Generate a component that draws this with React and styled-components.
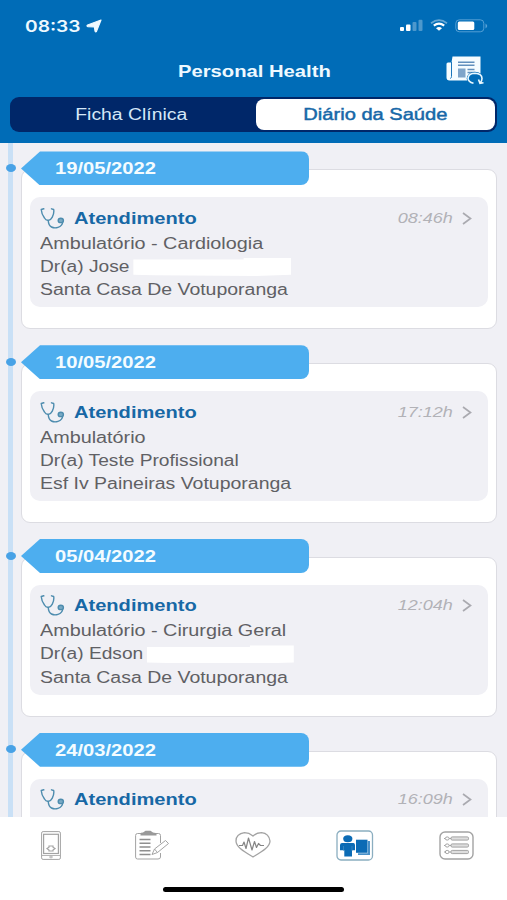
import React from "react";
import styled, { createGlobalStyle, css } from "styled-components";

const GlobalStyle = createGlobalStyle`
  * {
    box-sizing: border-box;
  }

  body {
    margin: 0;
    background: #fff;
    font-family: "Liberation Sans", Arial, sans-serif;
  }
`;

// widened type, every label picks its own factor
const wide = css`
  display: inline-block;
  white-space: pre;
  transform: scaleX(${(props) => props.$wide || 1.21});
  transform-origin: ${(props) => props.$origin || "left"} center;
`;

const Screen = styled.div`
  width: 507px;
  height: 900px;
  display: flex;
  flex-direction: column;
  overflow: hidden;
  background: #f0f0f5;
`;

const Header = styled.header`
  height: 143px;
  flex: none;
  background: #006cb7;
  color: #eef9ff;
`;

const StatusBar = styled.div`
  height: 50px;
  padding: 1px 19px 0 25px;
  display: flex;
  align-items: center;
  justify-content: space-between;
`;

const Clock = styled.div`
  width: 77px;
  display: flex;
  align-items: center;
  justify-content: space-between;
`;

const ClockText = styled.span`
  ${wide}
  font: 600 16px/20px Inter, sans-serif;
`;

const StatusIcons = styled.div`
  display: flex;
  align-items: center;
  gap: 7px;
`;

const TitleBar = styled.div`
  height: 47px;
  padding: 0 23px 6px 63px;
  display: grid;
  grid-template-columns: 1fr 38px;
  align-items: center;
`;

const Title = styled.h1`
  margin: 0;
  text-align: center;
  font-size: 16.5px;
  line-height: 20px;

  span {
    ${wide}
  }
`;

const Tabs = styled.div`
  height: 35px;
  margin: 0 10px;
  padding: 2px;
  display: grid;
  grid-template-columns: 244px 1fr;
  border-radius: 9px;
  background: #002769;
`;

const Tab = styled.button`
  border: none;
  padding: ${(props) => (props.$active ? "0" : "0 5px 0 0")};
  border-radius: 8px;
  font: 16px/20px "Liberation Sans", Arial, sans-serif;
  color: ${(props) => (props.$active ? "#1768a8" : "#d5e8f8")};
  background: ${(props) => (props.$active ? "#fff" : "transparent")};
  -webkit-text-stroke: ${(props) => (props.$active ? "0.45px #1768a8" : "0")};

  span {
    ${wide}
  }
`;

const Feed = styled.main`
  flex: 1;
  min-height: 0;
  overflow: hidden;
`;

const Entry = styled.section`
  height: 193.8px;
  display: grid;
  grid-template-columns: 21px 476px;
`;

const Rail = styled.div`
  padding: 21px 0 0 5.5px;
  background: linear-gradient(#c9e0f6, #c9e0f6) 8px 0 / 5px 100% no-repeat;
`;

const Dot = styled.div`
  width: 10px;
  height: 8px;
  border-radius: 50%;
  background: #48a2e6;
`;

const EntryBody = styled.div`
  padding-top: 8.4px;
`;

const Ribbon = styled.div`
  width: 288px;
  height: 34px;
  margin-bottom: -16.2px;
  padding-left: 34px;
  position: relative;
  border-radius: 0 8px 8px 0;
  background: #4daeef;
  clip-path: polygon(19px 0, 100% 0, 100% 100%, 19px 100%, 0 50%);
  color: #f4fcff;
  font-size: 16px;
  font-weight: bold;
  line-height: 35px;

  span {
    ${wide}
  }
`;

const Card = styled.div`
  height: 160px;
  padding: 27px 8px 0;
  border: 1px solid #dcdce2;
  border-radius: 9px;
  background: #fff;
`;

const Panel = styled.article`
  height: 110px;
  padding: 9.5px 16px 0 10px;
  border-radius: 10px;
  background: #f0f0f5;
  color: #606064;
`;

const PanelHead = styled.div`
  height: 24px;
  display: flex;
  align-items: center;
`;

const Kind = styled.h2`
  margin: 0 auto 0 8px;
  font-size: 16px;
  line-height: 24px;
  color: #1768a5;

  span {
    ${wide}
  }
`;

const Hour = styled.span`
  ${wide}
  font-size: 15px;
  line-height: 22px;
  font-style: italic;
  color: #b2b2b7;
  margin: 0 9px 2px 0;
`;

const Line = styled.p`
  margin: 0;
  height: 23.2px;
  font-size: 16px;
  line-height: 25px;

  > span {
    ${wide}
  }
`;

const Blank = styled.i`
  display: inline-block;
  width: ${(props) => props.$width}px;
  height: 18px;
  margin-left: 3px;
  vertical-align: -4px;
  background: #fff;
  clip-path: polygon(0 9%, 70% 9%, 70% 0, 100% 0, 100% 94%, 78% 100%, 14% 97%, 0 94%);
`;

const BottomBar = styled.nav`
  height: 83px;
  flex: none;
  padding-top: 10px;
  background: #fff;
`;

const NavItems = styled.div`
  display: grid;
  grid-template-columns: repeat(5, 1fr);
  height: 36px;
`;

const NavItem = styled.button`
  border: none;
  padding: 0;
  background: none;
  display: flex;
  align-items: center;
  justify-content: center;
  color: #a3a3a3;
`;

const HomeIndicator = styled.div`
  width: 181px;
  height: 5px;
  margin: 24px auto 0;
  border-radius: 3px;
  background: #000;
`;

const LocationIcon = () => (
  <svg width="16" height="14" viewBox="0 0 16 14">
    <path d="M15 1 10.500 12.400 Q9.600 13.600 9 12 L8.400 8 2 7.600 Q.2 7 1.600 6 Z" fill="#eef9ff" stroke="#eef9ff" strokeWidth="1.200" strokeLinejoin="round" />
  </svg>
);

const SignalIcon = () => (
  <svg width="23" height="13" viewBox="0 0 23 13" fill="#fff">
    <rect x="0" y="8" width="4" height="4" rx="1" />
    <rect x="6" y="5.500" width="4.500" height="6.500" rx="1" />
    <rect x="12.500" y="3" width="4" height="9" rx="1" opacity=".3" />
    <rect x="18.500" y=".8" width="4" height="11.200" rx="1" opacity=".3" />
  </svg>
);

const WifiIcon = () => (
  <svg width="18" height="13" viewBox="0 0 18 13" fill="none" stroke="#fff">
    <path d="M1 4.200Q9-1.800 17 4.200" strokeWidth="1.700" opacity=".4" />
    <path d="M3.800 6.700Q9 2.600 14.200 6.700" strokeWidth="2.200" />
    <path d="M6 9.200Q9 7 12 9.200L9 11.800Z" fill="#fff" stroke="none" />
  </svg>
);

const BatteryIcon = () => (
  <svg width="33" height="14" viewBox="0 0 33 14">
    <rect x=".8" y=".8" width="28" height="12" rx="3.500" fill="none" stroke="#6fb0de" opacity=".75" />
    <rect x="2.800" y="2.500" width="16.500" height="8.600" rx="1.500" fill="#fff" />
    <path d="M30.500 4.500Q34 7 30.500 9.500Z" fill="#6fb0de" opacity=".8" />
  </svg>
);

const NewsIcon = () => (
  <svg width="38" height="30" viewBox="0 0 38 30">
    <path d="M6.500.5H34.500V24.500H3.500Q.5 24.500.5 21.500V8Q.5 6.500 2 6.500H5.500Z" fill="#f5fcff" />
    <path d="M5.500 6V20.500Q5.500 22 4.300 22.500" fill="none" stroke="#1a76bb" />
    <path d="M12 6.200H28.500M12 9.200H28.500" stroke="#6290bd" strokeWidth="1.600" />
    <rect x="12" y="12.500" width="7.500" height="9" fill="#7fa5ca" />
    <path d="M21.500 13.500H28.500M21.500 16.500H28.500" stroke="#6290bd" strokeWidth="1.600" />
    <ellipse cx="29" cy="22.500" rx="8.300" ry="6.800" fill="#006cb7" />
    <path d="M27.500 27.300Q22 26 22 22Q23 17.200 29 17.200Q36 17.500 36 22.500Q36 25 34.300 26.700M32.500 23.500L34 27.300 37.500 26.800" fill="none" stroke="#e9f8ff" strokeWidth="1.600" />
  </svg>
);

const StethoscopeIcon = () => (
  <svg width="26" height="22" viewBox="0 0 26 22" fill="none" stroke="#4d8cae" strokeWidth="1.400" strokeLinecap="round" strokeLinejoin="round">
    <path d="M3.800.8 1.200 1.500Q1.500 6 4.500 10Q6 12.600 8.200 12.200Q10.500 12.600 12.300 9.200Q14.300 5.500 13.700 1.500L11.500.8M8.200 12.200Q8.500 17.500 11.500 19Q14.500 20.500 18 19.300Q22.500 18 22.800 13.500" />
    <ellipse cx="20.800" cy="12.400" rx="2.600" ry="2.200" fill="#79a9c4" />
  </svg>
);

const Chevron = () => (
  <svg width="10" height="14" viewBox="0 0 10 14" fill="none" stroke="#aaaab0" strokeWidth="1.700">
    <path d="M1 1 8.500 6.500 1 12" />
  </svg>
);

const PhoneIcon = () => (
  <svg width="20" height="29" viewBox="0 0 20 29" fill="none" stroke="currentColor">
    <rect x=".6" y=".6" width="18.800" height="27.800" rx="1.500" />
    <rect x="2.600" y="3.300" width="14.800" height="19.200" strokeWidth="1.200" />
    <path d="M1 24.500H19M8 26H12M10 24.500V27.500" strokeWidth=".8" />
    <path d="M8 15H12V16.200L14 17.500 12 19V20H8V19L6 17.500 8 16.200Z" strokeWidth="1.200" />
  </svg>
);

const NotesIcon = () => (
  <svg width="34" height="30" viewBox="0 0 34 30" fill="none" stroke="currentColor">
    <path d="M6 3.500H2.500Q.6 3.500.6 5.500V27Q.6 29 2.500 29H23Q25.500 29 25.500 27V23M20.500 3.500H23.500Q25.500 3.500 25.500 5.500V13" />
    <path d="M5.500 5.500V3.500Q5.500 2.500 8 2.500L10.500.7H15.500L18 2.500Q21.500 2.500 21.500 4V5.500Z" fill="#999" stroke="none" />
    <path d="M4.500 9.500H15.500M4.500 13.200H15.500M4.500 17H15.500M4.500 20.800H15.500M4.500 24.500H15.500" stroke="#8f8f8f" strokeWidth="1.600" />
    <path d="M17 24.500 19.500 19 30.500 10.500 33.500 13.500 22.500 22.500ZM19.500 19 22.500 22.500" fill="#fff" />
  </svg>
);

const HeartIcon = () => (
  <svg width="36" height="26" viewBox="0 0 36 26" fill="none" stroke="currentColor" strokeWidth="1.300" strokeLinejoin="round">
    <path d="M18 4Q14 .7 9.500.7Q1 2 1 9C1 15 9 19.500 18 25C27 19.500 35 15 35 9Q34 1.500 26.500.7Q21.500.8 18 4Z" />
    <path d="M4 13.500H7.500L9 10 11 16.500 13.500 6 17 18 19.500 9.500 21.500 15.500 23.500 11.500 25.500 13.500H29" stroke="#858585" strokeWidth="1.200" />
  </svg>
);

const DiaryIcon = () => (
  <svg width="38" height="31" viewBox="0 0 38 31">
    <rect x="1" y="1" width="35.500" height="29" rx="4" fill="#fff" stroke="#8baec0" strokeWidth="1.300" />
    <g fill="#0b6bb5">
      <ellipse cx="11.800" cy="8.700" rx="4.600" ry="3.500" />
      <path d="M6 13H17.500Q18.800 13 19 15V20.300H16V26.500H8.300V20.300H4V15Q4.200 13 6 13Z" />
      <path d="M20 9.700H31.500V22.800H20Z" />
      <path d="M31.800 11H34V25H22V23.200H31.800Z" opacity=".75" />
    </g>
    <path d="M7.500 16V21M16 16V21" stroke="#4c96ca" strokeWidth=".6" />
  </svg>
);

const ListIcon = () => (
  <svg width="35" height="29" viewBox="0 0 35 29" fill="none" stroke="currentColor">
    <rect x="1" y="1" width="33" height="27" rx="5" strokeWidth="1.400" />
    {[7.5, 14.5, 21].map((y) => (
      <g key={y}>
        <ellipse cx="8.200" cy={y} rx="1.900" ry="1.600" />
        <path d={`M5 ${y}H6M10.200 ${y}H12`} />
        <rect x="12" y={y - 1.6} width="17.500" height="3.200" rx="1.200" fill="#dedede" />
      </g>
    ))}
  </svg>
);

const entries = [
  { date: "19/05/2022", hour: "08:46h", place: "Ambulatório - Cardiologia", doctor: "Dr(a) Jose", blank: 132, unit: "Santa Casa De Votuporanga" },
  { date: "10/05/2022", hour: "17:12h", place: "Ambulatório", doctor: "Dr(a) Teste Profissional", unit: "Esf Iv Paineiras Votuporanga" },
  { date: "05/04/2022", hour: "12:04h", place: "Ambulatório - Cirurgia Geral", doctor: "Dr(a) Edson", blank: 123, unit: "Santa Casa De Votuporanga" },
  { date: "24/03/2022", hour: "16:09h" },
];

const DiaryEntry = ({ entry }) => (
  <Entry>
    <Rail><Dot /></Rail>
    <EntryBody>
      <Ribbon $wide={1.26}><span>{entry.date}</span></Ribbon>
      <Card>
        <Panel>
          <PanelHead>
            <StethoscopeIcon />
            <Kind $wide={1.255}><span>Atendimento</span></Kind>
            <Hour $wide={1.2} $origin="right">{entry.hour}</Hour>
            <Chevron />
          </PanelHead>
          {entry.place && (
            <>
              <Line $wide={1.236}><span>{entry.place}</span></Line>
              <Line $wide={1.197}><span>{entry.doctor}{entry.blank && <Blank $width={entry.blank} />}</span></Line>
              <Line $wide={1.217}><span>{entry.unit}</span></Line>
            </>
          )}
        </Panel>
      </Card>
    </EntryBody>
  </Entry>
);

export default function App() {
  return (
    <Screen>
      <GlobalStyle />
      <Header>
        <StatusBar>
          <Clock>
            <ClockText $wide={1.2}>08:33</ClockText>
            <LocationIcon />
          </Clock>
          <StatusIcons>
            <SignalIcon />
            <WifiIcon />
            <BatteryIcon />
          </StatusIcons>
        </StatusBar>
        <TitleBar>
          <Title $origin="center" $wide={1.225}><span>Personal Health</span></Title>
          <NewsIcon />
        </TitleBar>
        <Tabs>
          <Tab $origin="center"><span>Ficha Clínica</span></Tab>
          <Tab $origin="center" $active $wide={1.255}><span>Diário da Saúde</span></Tab>
        </Tabs>
      </Header>
      <Feed>
        {entries.map((entry) => (
          <DiaryEntry key={entry.date} entry={entry} />
        ))}
      </Feed>
      <BottomBar>
        <NavItems>
          <NavItem><PhoneIcon /></NavItem>
          <NavItem><NotesIcon /></NavItem>
          <NavItem><HeartIcon /></NavItem>
          <NavItem><DiaryIcon /></NavItem>
          <NavItem><ListIcon /></NavItem>
        </NavItems>
        <HomeIndicator />
      </BottomBar>
    </Screen>
  );
}
